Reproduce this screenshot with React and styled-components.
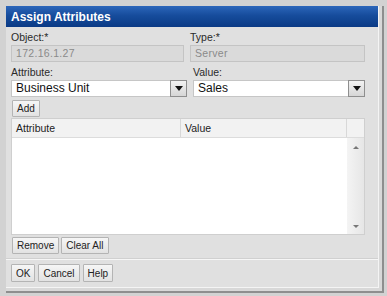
import styled, { createGlobalStyle } from 'styled-components'

const GlobalStyle = createGlobalStyle`
    html, body {
        margin: 0;
        padding: 0;
        background: #d2d2d2;
    }
    * {
        box-sizing: border-box;
    }
`

export default function App() {
    return (
        <>
            <GlobalStyle />
            <Frame>
                <Shell>
                    <Dialog>
                        <TitleBar>Assign Attributes</TitleBar>
                        <Body>
                            <FieldRow>
                                <Field $w={176}>
                                    <Label>Object:*</Label>
                                    <ReadOnly>172.16.1.27</ReadOnly>
                                </Field>
                                <Field $w={178}>
                                    <Label>Type:*</Label>
                                    <ReadOnly>Server</ReadOnly>
                                </Field>
                            </FieldRow>
                            <FieldRow>
                                <Field $w={176}>
                                    <Label>Attribute:</Label>
                                    <Select>
                                        <SelectText>Business Unit</SelectText>
                                        <DropButton>
                                            <Arrow />
                                        </DropButton>
                                    </Select>
                                </Field>
                                <Field $w={172}>
                                    <Label>Value:</Label>
                                    <Select>
                                        <SelectText>Sales</SelectText>
                                        <DropButton>
                                            <Arrow />
                                        </DropButton>
                                    </Select>
                                </Field>
                            </FieldRow>
                            <ButtonRow $mb={1}>
                                <Button>Add</Button>
                            </ButtonRow>
                            <Table>
                                <HeadRow>
                                    <HeadCell $w={169}>Attribute</HeadCell>
                                    <HeadCell $w={166}>Value</HeadCell>
                                    <HeadCell $w={17} />
                                </HeadRow>
                                <TableBody>
                                    <Rows />
                                    <ScrollBar>
                                        <ScrollArrow $up />
                                        <ScrollArrow />
                                    </ScrollBar>
                                </TableBody>
                            </Table>
                            <ButtonRow $mb={2}>
                                <Button>Remove</Button>
                                <Button>Clear All</Button>
                            </ButtonRow>
                        </Body>
                        <Footer>
                            <Button $tall>OK</Button>
                            <Button $tall>Cancel</Button>
                            <Button $tall>Help</Button>
                        </Footer>
                    </Dialog>
                </Shell>
            </Frame>
        </>
    )
}

const Frame = styled.div`
    width: 387px;
    height: 296px;
    padding: 6px 3px 3px 6px;
    background: #d2d2d2;
    font-family: 'Liberation Sans', Arial, sans-serif;
`

const Shell = styled.div`
    height: 100%;
    padding: 0 3px 3px 0;
    border-right: 2px solid #8e8e8e;
    border-bottom: 2px solid #8e8e8e;
    background: #d8d8d8;
`

const Dialog = styled.div`
    display: flex;
    flex-direction: column;
    height: 100%;
    background: #e0e0e0;
    border-right: 1px solid #f4f4f4;
    border-bottom: 1px solid #f4f4f4;
`

const TitleBar = styled.div`
    display: flex;
    align-items: center;
    height: 21px;
    padding: 0 5px;
    color: #fff;
    font-size: 12px;
    font-weight: bold;
    background: linear-gradient(#2c66ba 0%, #164c9c 45%, #0a3a85 100%);
`

const Body = styled.div`
    display: flex;
    flex-direction: column;
    padding: 3px 13px 0 5px;
`

const FieldRow = styled.div`
    display: flex;
    gap: 6px;
    margin-bottom: 3px;
`

const Field = styled.div`
    display: flex;
    flex-direction: column;
    width: ${p => p.$w}px;
`

const Label = styled.div`
    height: 14px;
    line-height: 14px;
    font-size: 10.5px;
    color: #2a2a2a;
    margin-bottom: 1px;
`

const ReadOnly = styled.div`
    height: 17px;
    padding: 0 4px;
    line-height: 15px;
    font-size: 10.5px;
    letter-spacing: 0.3px;
    color: #8a8a8a;
    background: #dadada;
    border: 1px solid #c4c4c4;
`

const Select = styled.div`
    display: flex;
    height: 17px;
    background: #fff;
    border: 1px solid #c6c6c6;
`

const SelectText = styled.div`
    flex: 1;
    padding: 0 4px;
    line-height: 15px;
    font-size: 12px;
    color: #111;
`

const DropButton = styled.div`
    display: flex;
    align-items: center;
    justify-content: center;
    width: 17px;
    margin: -1px -1px -1px 0;
    border: 1px solid #8e8e8e;
    background: linear-gradient(#f2f2f2, #d6d6d6);
`

const Arrow = styled.div`
    width: 0;
    height: 0;
    border-left: 4px solid transparent;
    border-right: 4px solid transparent;
    border-top: 5px solid #111;
`

const ButtonRow = styled.div`
    display: flex;
    gap: 2px;
    padding: 0 1px;
    margin-bottom: ${p => p.$mb}px;
`

const Button = styled.div`
    display: flex;
    align-items: center;
    justify-content: center;
    height: ${p => (p.$tall ? '18px' : '17px')};
    padding: 0 4px;
    font-size: 10px;
    color: #222;
    background: linear-gradient(#f6f6f6, #e2e2e2);
    border: 1px solid #b4b4b4;
    border-radius: 1px;
`

const Table = styled.div`
    display: flex;
    flex-direction: column;
    height: 117px;
    margin-bottom: 2px;
    background: #fff;
    border: 1px solid #cfcfcf;
`

const HeadRow = styled.div`
    display: flex;
    height: 19px;
    background: #f2f2f2;
    border-bottom: 1px solid #dcdcdc;
`

const HeadCell = styled.div`
    width: ${p => p.$w}px;
    padding: 0 4px;
    line-height: 18px;
    font-size: 10.5px;
    color: #222;
    border-right: 1px solid #d8d8d8;
    &:last-child {
        border-right: none;
    }
`

const TableBody = styled.div`
    display: flex;
    flex: 1;
`

const Rows = styled.div`
    flex: 1;
`

const ScrollBar = styled.div`
    display: flex;
    flex-direction: column;
    justify-content: space-between;
    align-items: center;
    width: 17px;
    padding: 8px 0 6px;
    background: linear-gradient(90deg, #f4f4f4, #e6e6e6);
`

const ScrollArrow = styled.div`
    width: 0;
    height: 0;
    border-left: 3px solid transparent;
    border-right: 3px solid transparent;
    ${p => (p.$up ? 'border-bottom: 3px solid #777;' : 'border-top: 3px solid #777;')}
`

const Footer = styled.div`
    display: flex;
    gap: 3px;
    margin-top: 3px;
    padding: 4px 5px 0;
    border-top: 1px solid #f6f6f6;
    box-shadow: 0 -1px 0 #d0d0d0;
`
